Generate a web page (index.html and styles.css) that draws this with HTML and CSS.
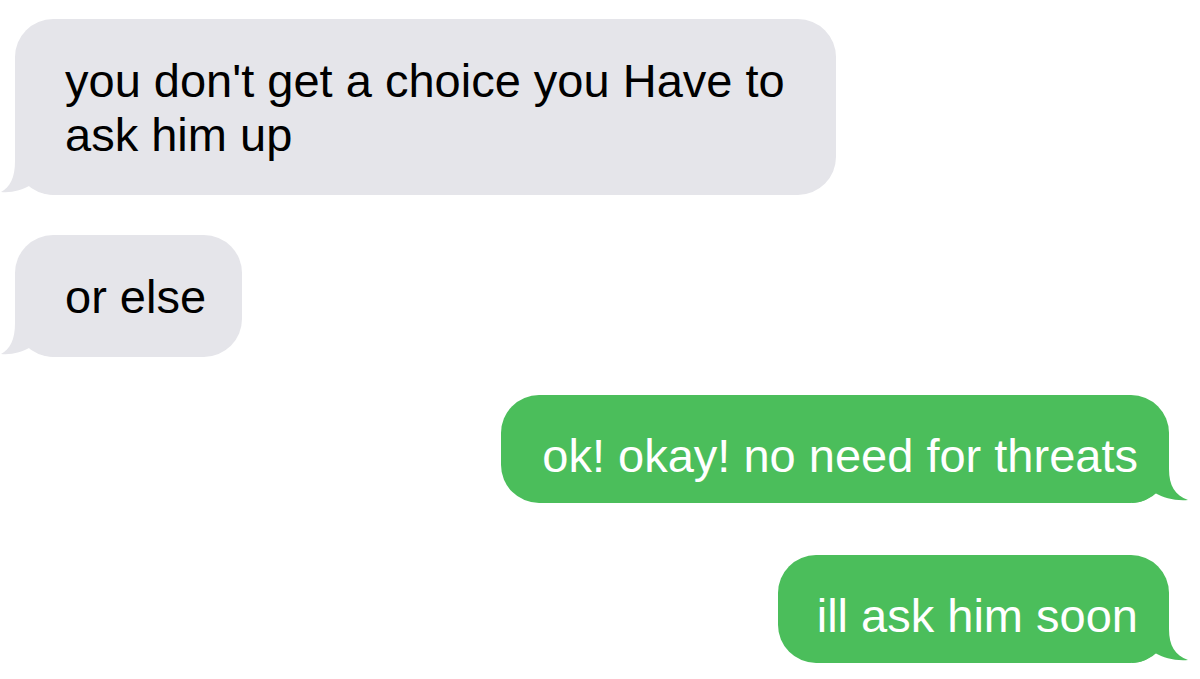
FILE: index.html
```html
<!DOCTYPE html>
<html lang="en">
<head>
    <meta charset="UTF-8">
    <meta name="viewport" content="width=device-width, initial-scale=1">
    <title>Messages</title>
    <link rel="stylesheet" href="styles.css">
</head>
<body>
    <div class="thread">
        <div class="bubble received first">
            <span class="text">you don't get a choice you Have to ask him up</span>
            <svg class="tail" viewBox="0 0 56 48" width="56" height="48"><path d="M15 0 L15 14 C15 31 10 40 1 45 C12 46 22 43 31 38 C37 44 45 48 56 48 L56 0 Z"/></svg>
        </div>
        <div class="bubble received second">
            <span class="text">or else</span>
            <svg class="tail" viewBox="0 0 56 48" width="56" height="48"><path d="M15 0 L15 14 C15 31 10 40 1 45 C12 46 22 43 31 38 C37 44 45 48 56 48 L56 0 Z"/></svg>
        </div>
        <div class="bubble sent third">
            <span class="text">ok! okay! no need for threats</span>
            <svg class="tail" viewBox="0 0 56 48" width="56" height="48"><path d="M19 0 L19 14 C19 31 13 40 0 45 C13 46 24 43 33 38 C39 44 47 48 56 48 L56 0 Z"/></svg>
        </div>
        <div class="bubble sent fourth">
            <span class="text">ill ask him soon</span>
            <svg class="tail" viewBox="0 0 56 48" width="56" height="48"><path d="M19 0 L19 14 C19 31 13 40 0 45 C13 46 24 43 33 38 C39 44 47 48 56 48 L56 0 Z"/></svg>
        </div>
    </div>
</body>
</html>
```

FILE: styles.css
```css
html, body {
    margin: 0;
    height: 100%;
    overflow: hidden;
}
body {
    font-family: "Liberation Sans", Arial, sans-serif;
    background-color: #ffffff;
}
.thread {
    display: flex;
    flex-direction: column;
    padding: 19px 31px 0 15px;
}
.bubble {
    position: relative;
    box-sizing: border-box;
    font-size: 47px;
    line-height: 54px;
    border-radius: 38px;
}
.text {
    position: relative;
    z-index: 1;
}
.received {
    align-self: flex-start;
    background-color: #e5e5ea;
    color: #000000;
    padding: 35px 36px 33px 50px;
}
.sent {
    align-self: flex-end;
    background-color: #4bbe5b;
    color: #ffffff;
    padding: 34px 31px 20px 41px;
}
.first {
    max-width: 821px;
    padding-right: 40px;
}
.second {
    margin-top: 40px;
}
.third {
    margin-top: 38px;
}
.fourth {
    margin-top: 52px;
    padding-left: 39px;
}
.tail {
    position: absolute;
    bottom: 0;
}
.received .tail {
    left: -15px;
    fill: #e5e5ea;
}
.sent .tail {
    right: -19px;
    fill: #4bbe5b;
    transform: scaleX(-1);
}
```
